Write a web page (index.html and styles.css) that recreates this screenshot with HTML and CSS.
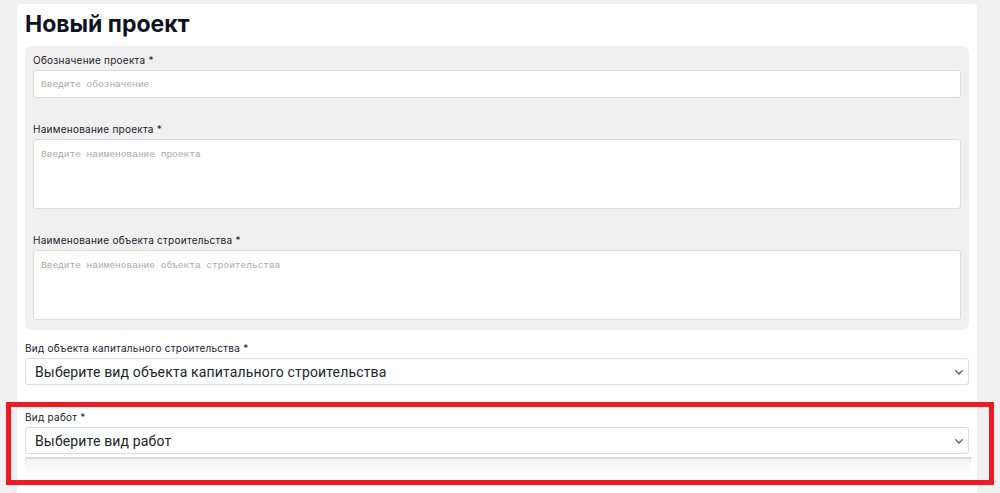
FILE: index.html
```html
<!DOCTYPE html>
<html lang="ru">
<head>
  <meta charset="UTF-8" />
  <title>Новый проект</title>
  <meta name="viewport" content="width=device-width, initial-scale=1" />
  <link rel="stylesheet" href="styles.css">
</head>
<body>
  <div class="page-card">
    <h1 class="page-title">Новый проект</h1>

    <!-- Основные сведения -->
    <div class="form-panel">
      <div class="field">
        <label class="field-label">Обозначение проекта *</label>
        <input class="text-input" type="text" placeholder="Введите обозначение" />
      </div>
      <div class="field">
        <label class="field-label">Наименование проекта *</label>
        <textarea class="text-area" placeholder="Введите наименование проекта"></textarea>
      </div>
      <div class="field">
        <label class="field-label">Наименование объекта строительства *</label>
        <textarea class="text-area" placeholder="Введите наименование объекта строительства"></textarea>
      </div>
    </div>

    <div class="field field-outer first">
      <label class="field-label">Вид объекта капитального строительства *</label>
      <div class="select-box">
        <span>Выберите вид объекта капитального строительства</span>
        <svg class="chevron" viewBox="0 0 8 5" width="8" height="5"><path d="M0.7 0.7l3.3 3.3 3.3-3.3" fill="none" stroke="#495057" stroke-width="1.2" stroke-linecap="round" stroke-linejoin="round"/></svg>
      </div>
    </div>

    <div class="field field-outer">
      <label class="field-label">Вид работ *</label>
      <div class="select-box">
        <span>Выберите вид работ</span>
        <svg class="chevron" viewBox="0 0 8 5" width="8" height="5"><path d="M0.7 0.7l3.3 3.3 3.3-3.3" fill="none" stroke="#495057" stroke-width="1.2" stroke-linecap="round" stroke-linejoin="round"/></svg>
      </div>
      <div class="list-edge"></div>
    </div>
  </div>

  <div class="highlight-frame"></div>
</body>
</html>
```

FILE: styles.css
```css
html, body {
  margin: 0;
  padding: 0;
  height: 100%;
  overflow: hidden;
  background: #f0f0f0;
  font-family: 'Inter', 'Noto Sans', sans-serif;
  color: #1c1c2b;
}

.page-card {
  margin: 4px 23px 0 17px;
  padding: 6px 8px 40px;
  background: #fff;
  border-radius: 4px;
  min-height: 600px;
}

.page-title {
  margin: 0 0 7px;
  font-size: 23px;
  line-height: 29px;
  font-weight: 700;
  color: #0d1321;
}

.form-panel {
  background: #f0f0f0;
  border-radius: 6px;
  padding: 7px 8px 10px;
}

.field {
  display: flex;
  flex-direction: column;
}

.form-panel .field + .field {
  margin-top: 24px;
}

.field-outer.first {
  margin-top: 11px;
}

.field-outer + .field-outer {
  margin-top: 25px;
}

.field-label {
  font-size: 10px;
  line-height: 14px;
  font-weight: 400;
  letter-spacing: 0.25px;
  margin-bottom: 3px;
  color: #1c1c2b;
}

.text-input,
.text-area {
  box-sizing: border-box;
  width: 100%;
  margin: 0;
  border: 1px solid #dcdcdc;
  border-radius: 3px;
  background: #fff;
  font-family: 'Liberation Mono', 'DejaVu Sans Mono', monospace;
  font-size: 9.5px;
  padding: 0 7px;
  outline: none;
}

.text-input {
  height: 28px;
}

.text-area {
  height: 70px;
  padding-top: 9px;
  resize: none;
  display: block;
}

.text-input::placeholder,
.text-area::placeholder {
  color: #a9a9a9;
}

.select-box {
  box-sizing: border-box;
  height: 27px;
  display: flex;
  align-items: center;
  justify-content: space-between;
  padding: 0 5px 0 9px;
  border: 1px solid #dcdcdc;
  border-radius: 3px;
  background: #fff;
  font-family: 'Roboto', 'Noto Sans', sans-serif;
  font-size: 14px;
  letter-spacing: 0.15px;
  color: #212529;
}

.chevron {
  flex: none;
  margin-top: 1px;
}

.list-edge {
  margin-top: 3px;
  margin-right: -2px;
  height: 16px;
  border-top: 2px solid #dcdcdc;
  background: linear-gradient(#f3f3f3, rgba(255, 255, 255, 0));
}

.highlight-frame {
  position: absolute;
  left: 6px;
  top: 402px;
  width: 978px;
  height: 73px;
  border: 5px solid #ed1c24;
  pointer-events: none;
}
```
